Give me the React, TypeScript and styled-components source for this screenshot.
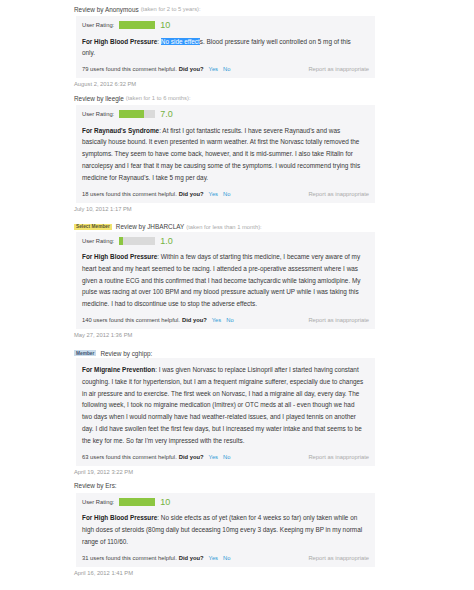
import React from "react";
import styled, { createGlobalStyle } from "styled-components";

const GlobalStyle = createGlobalStyle`
    body {
        margin: 0;
        background: #ffffff;
        font-family: "Liberation Sans", Arial, sans-serif;
    }
`;

const Page = styled.div`
    padding: 4px 0 0 74px;
    width: 302px;
`;

const Review = styled.section<{ $badge?: boolean }>`
    margin-top: ${p => (p.$badge ? 8 : 4)}px;

    &:first-child {
        margin-top: 0;
    }
`;

const Header = styled.div`
    display: flex;
    align-items: center;
    height: 10px;
    font-size: 6.4px;
    color: #444;
    white-space: nowrap;
`;

const Taken = styled.span`
    margin-left: 2px;
    font-size: 5.8px;
    color: #aaa;
`;

const Badge = styled.span<{ $select?: boolean }>`
    display: inline-flex;
    align-items: center;
    height: 6px;
    padding: 0 2px;
    margin-right: 4px;
    font-size: 4.8px;
    font-weight: bold;
    color: ${p => (p.$select ? "#5a5530" : "#3d5570")};
    background: ${p => (p.$select ? "#f2e36e" : "#c9dbeb")};
`;

const Card = styled.div<{ $badge?: boolean; $noRating?: boolean }>`
    box-sizing: border-box;
    width: 299px;
    margin: ${p => (p.$badge ? 0 : 2)}px 0 0 2px;
    padding: ${p => (p.$noRating ? 6 : 4)}px 5px 4px 6px;
    background: #f5f5f7;
`;

const RatingRow = styled.div`
    display: flex;
    align-items: center;
    height: 10px;
    font-size: 5.8px;
    color: #444;
`;

const Bar = styled.div`
    width: 36px;
    height: 8px;
    margin-left: 5px;
    background: #dadada;
`;

const BarFill = styled.div`
    height: 100%;
    background: #8cc641;
`;

const Score = styled.span`
    margin-left: 5px;
    font-size: 9px;
    color: #74b240;
`;

const Body = styled.p<{ $noRating?: boolean }>`
    margin: ${p => (p.$noRating ? 0 : 5.5)}px 0 0 0;
    font-size: 6.4px;
    line-height: 11.8px;
    color: #383838;
`;

const Condition = styled.strong`
    color: #222;
`;

const Selected = styled.span`
    background: #3297fd;
    color: #fff;
`;

const Footer = styled.div`
    display: flex;
    align-items: center;
    height: 10px;
    margin-top: 5px;
    font-size: 5.8px;
    color: #444;
    white-space: nowrap;
`;

const DidYou = styled.b`
    margin-left: 2px;
    color: #222;
`;

const Vote = styled.a`
    margin-left: 5px;
    color: #2d9ad6;
    text-decoration: none;
`;

const Report = styled.a`
    margin-left: auto;
    margin-right: 1px;
    color: #aaa;
`;

const DateLine = styled.div`
    height: 10px;
    margin-top: 1px;
    line-height: 10px;
    font-size: 5.8px;
    color: #999;
`;

type ReviewData = {
    badge?: "select" | "member";
    author: string;
    taken?: string;
    rating?: number;
    condition: string;
    lines: React.ReactNode[];
    helpful: number;
    date: string;
};

const reviews: ReviewData[] = [
    {
        author: "Anonymous",
        taken: "(taken for 2 to 5 years):",
        rating: 10,
        condition: "For High Blood Pressure",
        lines: [
            <>: <Selected>No side effect</Selected>s. Blood pressure fairly well controlled on 5 mg of this</>,
            "only.",
        ],
        helpful: 79,
        date: "August 2, 2012 6:32 PM",
    },
    {
        author: "lleegle",
        taken: "(taken for 1 to 6 months):",
        rating: 7,
        condition: "For Raynaud's Syndrome",
        lines: [
            ": At first I got fantastic results. I have severe Raynaud's and was",
            "basically house bound. It even presented in warm weather. At first the Norvasc totally removed the",
            "symptoms. They seem to have come back, however, and it is mid-summer. I also take Ritalin for",
            "narcolepsy and I fear that it may be causing some of the symptoms. I would recommend trying this",
            "medicine for Raynaud's. I take 5 mg per day.",
        ],
        helpful: 18,
        date: "July 10, 2012 1:17 PM",
    },
    {
        badge: "select",
        author: "JHBARCLAY",
        taken: "(taken for less than 1 month):",
        rating: 1,
        condition: "For High Blood Pressure",
        lines: [
            ": Within a few days of starting this medicine, I became very aware of my",
            "heart beat and my heart seemed to be racing. I attended a pre-operative assessment where I was",
            "given a routine ECG and this confirmed that I had become tachycardic while taking amlodipine. My",
            "pulse was racing at over 100 BPM and my blood pressure actually went UP while I was taking this",
            "medicine. I had to discontinue use to stop the adverse effects.",
        ],
        helpful: 140,
        date: "May 27, 2012 1:36 PM",
    },
    {
        badge: "member",
        author: "cghipp:",
        condition: "For Migraine Prevention",
        lines: [
            ": I was given Norvasc to replace Lisinopril after I started having constant",
            "coughing. I take it for hypertension, but I am a frequent migraine sufferer, especially due to changes",
            "in air pressure and to exercise. The first week on Norvasc, I had a migraine all day, every day. The",
            "following week, I took no migraine medication (Imitrex) or OTC meds at all - even though we had",
            "two days when I would normally have had weather-related issues, and I played tennis on another",
            "day. I did have swollen feet the first few days, but I increased my water intake and that seems to be",
            "the key for me. So far I'm very impressed with the results.",
        ],
        helpful: 63,
        date: "April 19, 2012 3:22 PM",
    },
    {
        author: "Ers:",
        rating: 10,
        condition: "For High Blood Pressure",
        lines: [
            ": No side efects as of yet (taken for 4 weeks so far) only taken while on",
            "high doses of steroids (80mg daily but deceasing 10mg every 3 days. Keeping my BP in my normal",
            "range of 110/60.",
        ],
        helpful: 31,
        date: "April 16, 2012 1:41 PM",
    },
];

const formatScore = (n: number) => (n === 10 ? "10" : n.toFixed(1));

export default function App() {
    return (
        <Page>
            <GlobalStyle />
            {reviews.map((r, i) => (
                <Review key={i} $badge={!!r.badge}>
                    <Header>
                        {r.badge === "select" && <Badge $select>Select Member</Badge>}
                        {r.badge === "member" && <Badge>Member</Badge>}
                        Review by {r.author}
                        {r.taken && <Taken>{r.taken}</Taken>}
                    </Header>
                    <Card $badge={!!r.badge} $noRating={r.rating === undefined}>
                        {r.rating !== undefined && (
                            <RatingRow>
                                User Rating:
                                <Bar>
                                    <BarFill style={{ width: `${r.rating * 10}%` }} />
                                </Bar>
                                <Score>{formatScore(r.rating)}</Score>
                            </RatingRow>
                        )}
                        <Body $noRating={r.rating === undefined}>
                            <Condition>{r.condition}</Condition>
                            {r.lines.map((line, j) => (
                                <React.Fragment key={j}>
                                    {j > 0 && <br />}
                                    {line}
                                </React.Fragment>
                            ))}
                        </Body>
                        <Footer>
                            {r.helpful} users found this comment helpful.
                            <DidYou>Did you?</DidYou>
                            <Vote>Yes</Vote>
                            <Vote>No</Vote>
                            <Report>Report as inappropriate</Report>
                        </Footer>
                    </Card>
                    <DateLine>{r.date}</DateLine>
                </Review>
            ))}
        </Page>
    );
}
